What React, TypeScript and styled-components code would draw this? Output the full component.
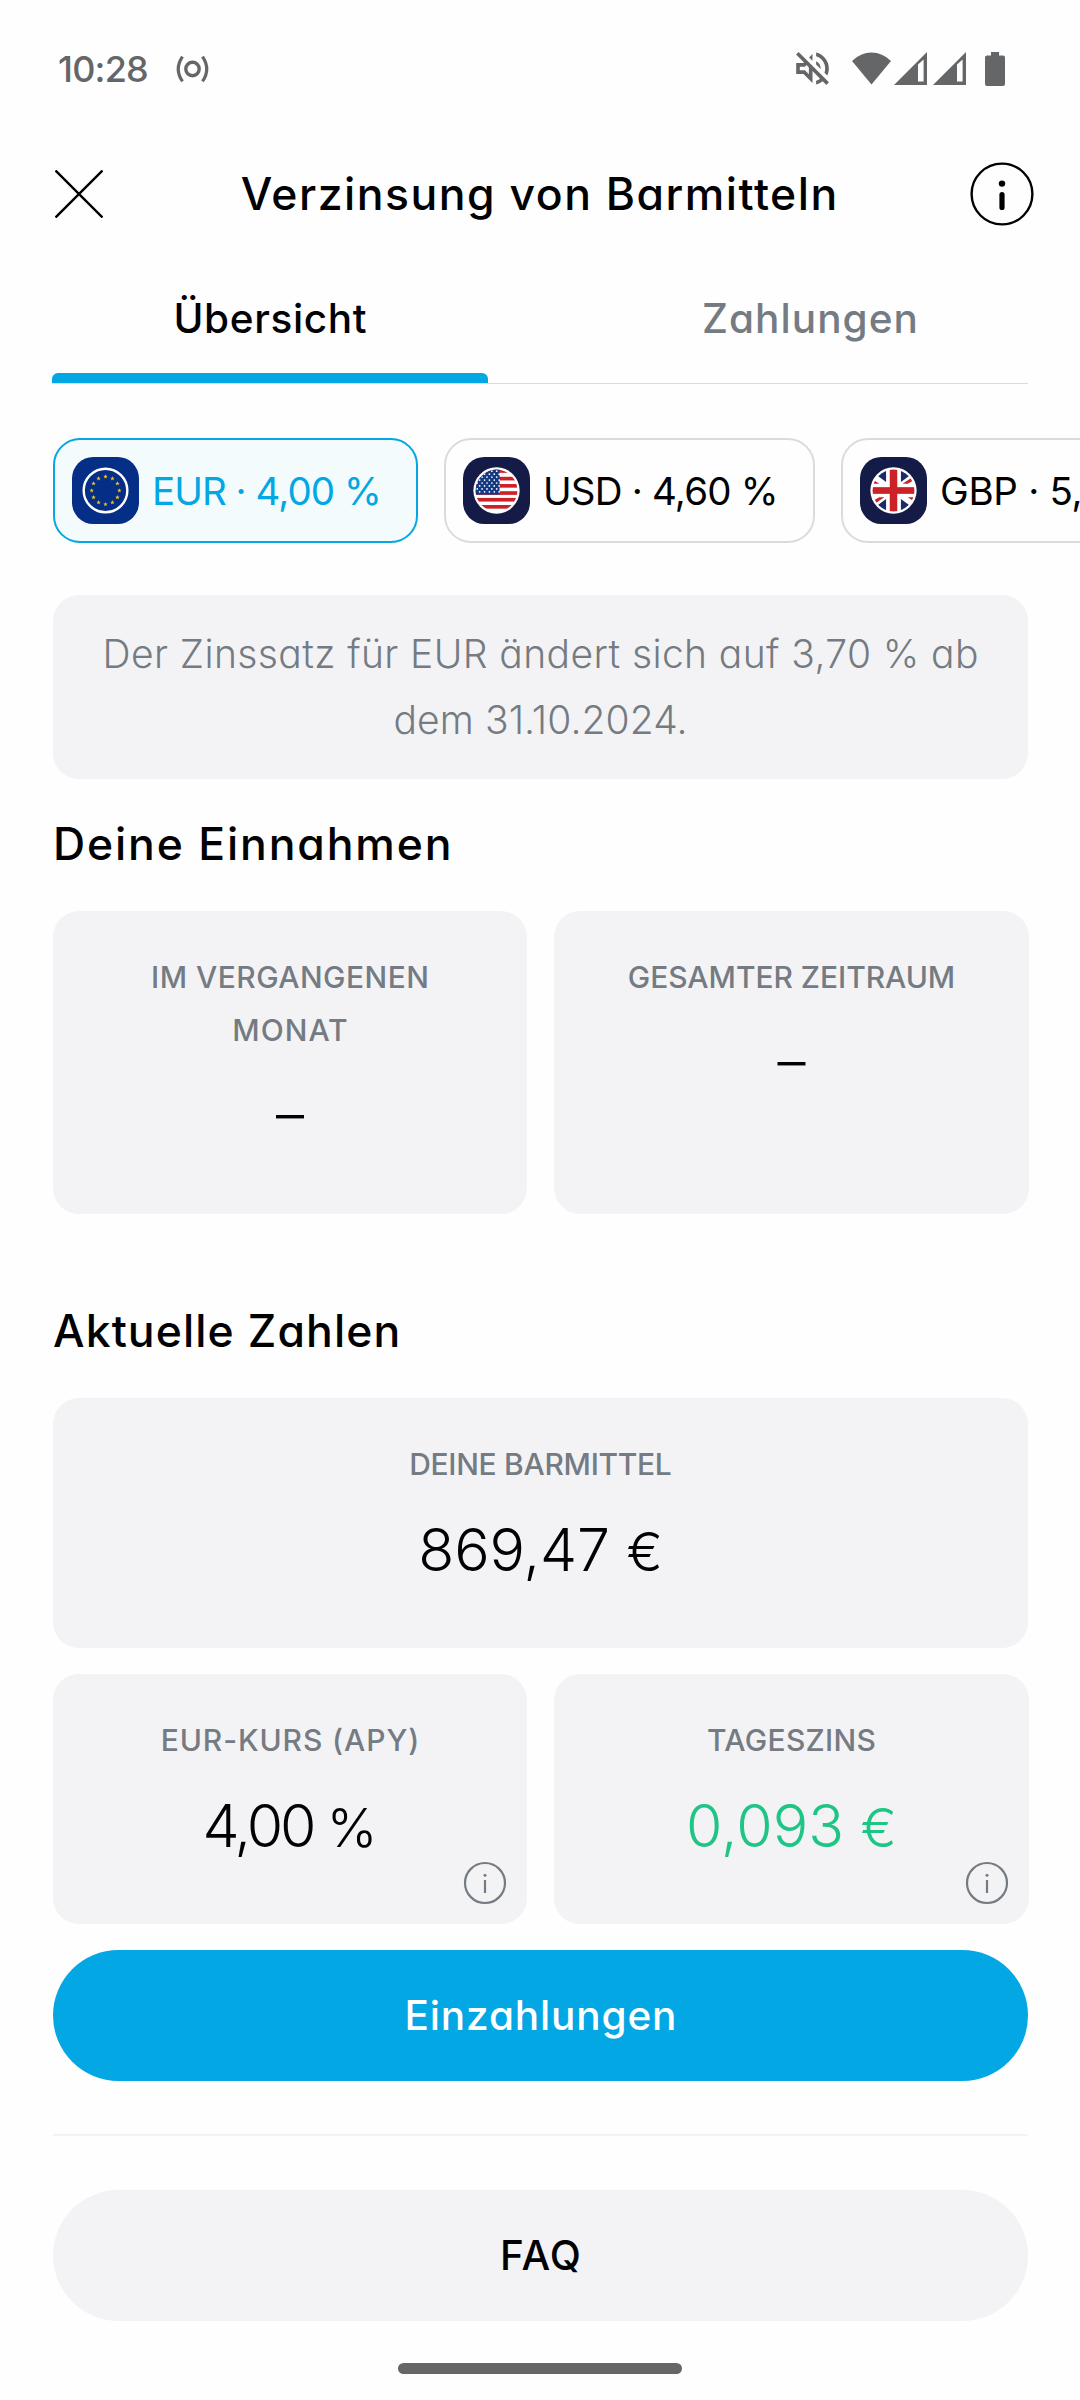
import React from "react";
import styled, { createGlobalStyle } from "styled-components";

const color = {
  ink: "#010103",
  muted: "#757b82",
  surface: "#f3f3f6",
  line: "#d8dce0",
  blue: "#02a7e3",
  green: "#1fc585",
  system: "#656668",
};

const GlobalStyle = createGlobalStyle`
  * { box-sizing: border-box; }
  html, body { margin: 0; padding: 0; background: #fefefe; }
  body {
    font-family: Inter, "Liberation Sans", sans-serif;
    font-feature-settings: "cv11";
    color: ${color.ink};
    overflow: hidden;
  }
  button { font: inherit; font-feature-settings: inherit; color: inherit; border: 0; background: none; padding: 0; }
  svg { display: block; flex: none; }
`;

const Screen = styled.main`
  width: 1080px;
  height: 2400px;
  display: flex;
  flex-direction: column;
  overflow: hidden;
  background: #fefefe;
`;

/* Text with tracking; the trailing gap is dropped so centring stays exact */
const Tracked = styled.span<{ $track?: number }>`
  letter-spacing: ${(p) => p.$track ?? 0}px;
  margin-right: ${(p) => -(p.$track ?? 0)}px;
  white-space: pre;
`;

const StatusBar = styled.header`
  height: 137px;
  padding: 0 75px 0 58px;
  display: flex;
  align-items: center;
  justify-content: space-between;
  color: ${color.system};
`;

const StatusGroup = styled.div<{ $gap?: number }>`
  display: flex;
  align-items: center;
  gap: ${(p) => p.$gap ?? 0}px;
`;

const Clock = styled.span`
  font-size: 36px;
  font-weight: 450;
`;

const TopBar = styled.div`
  height: 114px;
  padding: 0 46px 0 47px;
  display: grid;
  grid-template-columns: 64px 1fr 64px;
  align-items: center;
`;

const IconButton = styled.button`
  height: 64px;
  display: flex;
  align-items: center;
  justify-content: center;
`;

const Title = styled.h1`
  margin: 0;
  padding-right: 3px;
  text-align: center;
  font-size: 44.5px;
  line-height: 54px;
  font-weight: 500;
`;

const Tabs = styled.nav`
  height: 133px;
  margin: 0 52px;
  display: flex;
  justify-content: space-between;
  border-bottom: 1px solid ${color.line};
`;

const Tab = styled.button<{ $active?: boolean }>`
  width: 436px;
  display: flex;
  flex-direction: column;
  font-size: 40.5px;
  font-weight: 500;
  color: ${(p) => (p.$active ? color.ink : color.muted)};
`;

const TabLabel = styled.span`
  flex: 1;
  width: 100%;
  padding-top: 13px;
  display: flex;
  align-items: center;
  justify-content: center;
`;

const TabMarker = styled.span<{ $active?: boolean }>`
  width: 100%;
  height: 10px;
  border-radius: 6px 6px 0 0;
  background: ${(p) => (p.$active ? color.blue : "transparent")};
`;

const Chips = styled.div`
  margin: 54px 0 0 53px;
  display: flex;
  gap: 26px;
`;

const Chip = styled.button<{ $active?: boolean; $width: number }>`
  flex: none;
  width: ${(p) => p.$width}px;
  height: 105px;
  padding-left: 17px;
  display: flex;
  align-items: center;
  gap: 13px;
  font-size: 38.5px;
  font-weight: 400;
  border: 2.5px solid ${(p) => (p.$active ? color.blue : color.line)};
  border-radius: 27px;
  color: ${(p) => (p.$active ? color.blue : color.ink)};
  background: ${(p) => (p.$active ? "#f4fbfd" : "#fefefe")};
`;

const Body = styled.div`
  padding: 0 52px 0 53px;
  display: flex;
  flex-direction: column;
`;

const Notice = styled.p`
  margin: 52px 0 0;
  height: 184px;
  padding-top: 26px;
  display: flex;
  flex-direction: column;
  align-items: center;
  font-size: 39px;
  font-weight: 300;
  line-height: 66px;
  color: ${color.muted};
  background: ${color.surface};
  border-radius: 26px;
`;

const Heading = styled.h2<{ $spaced?: boolean }>`
  margin: ${(p) => (p.$spaced ? "52px" : "0")} 0 0;
  height: ${(p) => (p.$spaced ? 132 : 132)}px;
  padding-bottom: 2px;
  display: flex;
  align-items: center;
  font-size: 44.5px;
  line-height: 54px;
  font-weight: 500;
`;

const Pair = styled.div`
  display: grid;
  grid-template-columns: 474px 475px;
  gap: 27px;
`;

const Card = styled.section<{ $height: number }>`
  position: relative;
  height: ${(p) => p.$height}px;
  padding-top: 40px;
  display: flex;
  flex-direction: column;
  align-items: center;
  background: ${color.surface};
  border-radius: 26px;
`;

const CardLabel = styled.div`
  display: flex;
  flex-direction: column;
  align-items: center;
  font-size: 30px;
  font-weight: 450;
  line-height: 53px;
  color: ${color.muted};
`;

const CardValue = styled.div<{ $positive?: boolean }>`
  margin-top: 19px;
  font-size: 59px;
  font-weight: 300;
  line-height: 80px;
  color: ${(p) => (p.$positive ? color.green : color.ink)};
`;

const Unit = styled.span`
  font-size: 54px;
`;

const CardDash = styled.div`
  margin-top: 17px;
  font-size: 56px;
  font-weight: 300;
  line-height: 80px;
`;

const CardInfo = styled.button`
  position: absolute;
  right: 20px;
  bottom: 19px;
  color: ${color.muted};
`;

const Stack = styled.div`
  display: flex;
  flex-direction: column;
  gap: 26px;
`;

const PillButton = styled.button<{ $primary?: boolean }>`
  margin-top: ${(p) => (p.$primary ? 26 : 54)}px;
  height: 131px;
  border-radius: 66px;
  font-size: 40.5px;
  font-weight: 500;
  color: ${(p) => (p.$primary ? "#fff" : color.ink)};
  background: ${(p) => (p.$primary ? color.blue : color.surface)};
`;

const Divider = styled.hr`
  width: 100%;
  height: 2px;
  margin: 53px 0 0;
  border: 0;
  background: ${color.surface};
`;

const HomeBar = styled.div`
  width: 284px;
  height: 11px;
  margin: 42px auto 0;
  border-radius: 6px;
  background: ${color.system};
`;

const HotspotIcon = () => (
  <svg width="36" height="28" viewBox="0 0 36 28" fill="none" stroke="currentColor" strokeWidth="3.4">
    <circle cx="17.500" cy="14" r="6.700" />
    <path d="M7.500 1.600Q-1 14 7.500 26.400M27.500 1.600Q36 14 27.500 26.400" strokeWidth="3.200" />
  </svg>
);

const MutedIcon = () => (
  <svg width="33" height="33" viewBox="2.9 2.9 18.2 18.2" fill="currentColor">
    <path d="M4.34 2.93 2.93 4.34 7.29 8.7 7 9H3v6h4l5 5v-6.59l4.18 4.18c-.65.49-1.38.88-2.18 1.11v2.06a8.94 8.94 0 0 0 3.61-1.75l2.05 2.05 1.41-1.41L4.34 2.93zM10 15.17 7.83 13H5v-2h2.83l.88-.88L10 11.41v3.76zM19 12c0 .82-.15 1.61-.41 2.34l1.53 1.53c.56-1.17.88-2.48.88-3.87 0-4.28-2.99-7.86-7-8.77v2.06c2.89.86 5 3.54 5 6.71zm-7-8-1.88 1.88L12 7.76zm4.5 8A4.5 4.5 0 0 0 14 7.97v1.79l2.48 2.48c.01-.08.02-.16.02-.24z" />
  </svg>
);

const WifiIcon = () => (
  <svg width="39" height="33" viewBox="0 0 39 33" fill="currentColor">
    <path d="M19.5 32.5 0 9Q8.5 .5 19.5 .5T39 9Z" />
  </svg>
);

const SignalIcon = () => (
  <svg width="33" height="33" viewBox="0 0 33 33" fill="currentColor" fillRule="evenodd">
    <path d="M0 33 33 0V33ZM24 12.600V29.600H29.600V7.500Z" />
  </svg>
);

const BatteryIcon = () => (
  <svg width="20" height="34" viewBox="0 0 20 34" fill="currentColor">
    <path d="M6 0h8v3.4h4a2 2 0 0 1 2 2V32a2 2 0 0 1-2 2H2a2 2 0 0 1-2-2V5.400a2 2 0 0 1 2-2h4Z" />
  </svg>
);

const CloseIcon = () => (
  <svg width="48" height="48" viewBox="0 0 48 48" fill="none" stroke="currentColor" strokeWidth="2.4">
    <path d="M.5 .5 47.500 47.500M47.500 .5 .5 47.500" />
  </svg>
);

const InfoIcon = () => (
  <svg width="64" height="64" viewBox="0 0 64 64" fill="none" stroke="currentColor">
    <circle cx="32" cy="32" r="30.400" strokeWidth="2.400" />
    <circle cx="32" cy="21.600" r="3.200" fill="currentColor" stroke="none" />
    <path d="M32 32.500V45.500" strokeWidth="5.200" strokeLinecap="round" />
  </svg>
);

const SmallInfoIcon = () => (
  <svg width="44" height="44" viewBox="0 0 44 44" fill="none" stroke="currentColor">
    <circle cx="22" cy="22" r="20" strokeWidth="2.200" />
    <circle cx="22" cy="14.200" r="1.500" fill="currentColor" stroke="none" />
    <path d="M22 19V32" strokeWidth="2.200" />
  </svg>
);

const starPath = Array.from({ length: 10 }, (_, i) => {
  const r = i % 2 ? 1 : 2.3;
  const a = (i * Math.PI) / 5 - Math.PI / 2;
  return `${(r * Math.cos(a)).toFixed(2)},${(r * Math.sin(a)).toFixed(2)}`;
}).join(" ");

const EuFlag = () => (
  <svg width="67" height="67" viewBox="0 0 66 66">
    <rect width="66" height="66" rx="21" fill="#052e86" />
    <circle cx="33" cy="33" r="21.500" fill="none" stroke="#fff" strokeWidth="2.400" />
    {Array.from({ length: 12 }, (_, i) => {
      const a = (i * Math.PI) / 6;
      return (
        <polygon
          key={i}
          points={starPath}
          fill="#eec218"
          transform={`translate(${33 + 13.6 * Math.sin(a)} ${33 - 13.6 * Math.cos(a)})`}
        />
      );
    })}
  </svg>
);

const UsFlag = () => (
  <svg width="67" height="67" viewBox="0 0 66 66">
    <clipPath id="us-disc">
      <circle cx="33" cy="33" r="20.600" />
    </clipPath>
    <rect width="66" height="66" rx="21" fill="#151b47" />
    <circle cx="33" cy="33" r="22.800" fill="#fff" />
    <g clipPath="url(#us-disc)">
      {[12, 19.5, 26.6, 33.7, 40.3, 47.3].map((y) => (
        <rect key={y} x="10" y={y} width="46" height="3.600" fill="#cc2127" />
      ))}
      <rect x="10" y="10" width="26" height="27" fill="#133a80" />
      {[0, 1, 2, 3, 4, 5, 6, 7].map((row) =>
        [0, 1, 2, 3, 4].map((col) => (
          <circle
            key={`${row}-${col}`}
            cx={14 + col * 4.8 + (row % 2) * 2.4}
            cy={14 + row * 2.9}
            r=".85"
            fill="#fff"
          />
        ))
      )}
    </g>
  </svg>
);

const GbFlag = () => (
  <svg width="67" height="67" viewBox="0 0 66 66">
    <clipPath id="gb-disc">
      <circle cx="33" cy="33" r="20.600" />
    </clipPath>
    <rect width="66" height="66" rx="21" fill="#151b47" />
    <circle cx="33" cy="33" r="22.800" fill="#fff" />
    <g clipPath="url(#gb-disc)">
      <g fill="#1b2a6b">
        <path d="M25.700 24.700 16 17.600 19 10H25.700Z" />
        <path d="M40.300 24.700 50 17.600 47 10H40.300Z" />
        <path d="M25.700 41.300 16 48.400 19 56H25.700Z" />
        <path d="M40.300 41.300 50 48.400 47 56H40.300Z" />
      </g>
      <g fill="#cc2127">
        <path d="M12 23.500H14.500L19 26.300H12Z" />
        <path d="M54 42.500H51.500L47 39.700H54Z" />
        <path d="M42 26.300 50 21 54 22.500 47 26.300Z" />
        <path d="M24 39.700 16 45 12 43.500 19 39.700Z" />
        <rect x="29.300" y="10" width="7.400" height="46" />
        <rect x="10" y="29.700" width="46" height="6.600" />
      </g>
    </g>
  </svg>
);

export default function App() {
  return (
    <Screen>
      <GlobalStyle />
      <StatusBar>
        <StatusGroup $gap={26}>
          <Clock>
            <Tracked $track={-0.8}>10:28</Tracked>
          </Clock>
          <HotspotIcon />
        </StatusGroup>
        <StatusGroup $gap={19}>
          <StatusGroup $gap={23}>
            <MutedIcon />
            <StatusGroup $gap={3}>
              <WifiIcon />
              <StatusGroup $gap={6}>
                <SignalIcon />
                <SignalIcon />
              </StatusGroup>
            </StatusGroup>
          </StatusGroup>
          <BatteryIcon />
        </StatusGroup>
      </StatusBar>

      <TopBar>
        <IconButton aria-label="Schließen">
          <CloseIcon />
        </IconButton>
        <Title>
          <Tracked $track={1.5}>Verzinsung von Barmitteln</Tracked>
        </Title>
        <IconButton aria-label="Info">
          <InfoIcon />
        </IconButton>
      </TopBar>

      <Tabs>
        <Tab $active>
          <TabLabel>
            <Tracked $track={0.65}>Übersicht</Tracked>
          </TabLabel>
          <TabMarker $active />
        </Tab>
        <Tab>
          <TabLabel>
            <Tracked $track={1.05}>Zahlungen</Tracked>
          </TabLabel>
          <TabMarker />
        </Tab>
      </Tabs>

      <Chips>
        <Chip $active $width={365}>
          <EuFlag />
          <Tracked $track={-0.95}>EUR · 4,00 %</Tracked>
        </Chip>
        <Chip $width={371}>
          <UsFlag />
          <Tracked $track={-0.8}>USD · 4,60 %</Tracked>
        </Chip>
        <Chip $width={371}>
          <GbFlag />
          <Tracked $track={-0.3}>GBP · 5,</Tracked>
        </Chip>
      </Chips>

      <Body>
        <Notice>
          <Tracked $track={0.4}>Der Zinssatz für EUR ändert sich auf 3,70 % ab</Tracked>
          <Tracked $track={0.1}>dem 31.10.2024.</Tracked>
        </Notice>

        <Heading>
          <Tracked $track={1.85}>Deine Einnahmen</Tracked>
        </Heading>
        <Pair>
          <Card $height={303}>
            <CardLabel>
              <Tracked $track={0.45}>IM VERGANGENEN</Tracked>
              <Tracked $track={1}>MONAT</Tracked>
            </CardLabel>
            <CardDash>–</CardDash>
          </Card>
          <Card $height={303}>
            <CardLabel>
              <Tracked $track={-0.05}>GESAMTER ZEITRAUM</Tracked>
            </CardLabel>
            <CardDash>–</CardDash>
          </Card>
        </Pair>

        <Heading $spaced>
          <Tracked $track={1.1}>Aktuelle Zahlen</Tracked>
        </Heading>
        <Stack>
          <Card $height={250}>
            <CardLabel>
              <Tracked $track={-0.3}>DEINE BARMITTEL</Tracked>
            </CardLabel>
            <CardValue>
              <Tracked $track={-0.1}>
                869,47 <Unit>€</Unit>
              </Tracked>
            </CardValue>
          </Card>
          <Pair>
            <Card $height={250}>
              <CardLabel>
                <Tracked $track={0.9}>EUR-KURS (APY)</Tracked>
              </CardLabel>
              <CardValue>
                <Tracked $track={-3.1}>
                  4,00 <Unit>%</Unit>
                </Tracked>
              </CardValue>
              <CardInfo aria-label="Info zum EUR-Kurs">
                <SmallInfoIcon />
              </CardInfo>
            </Card>
            <Card $height={250}>
              <CardLabel>
                <Tracked $track={0.3}>TAGESZINS</Tracked>
              </CardLabel>
              <CardValue $positive>
                <Tracked>
                  0,093 <Unit>€</Unit>
                </Tracked>
              </CardValue>
              <CardInfo aria-label="Info zum Tageszins">
                <SmallInfoIcon />
              </CardInfo>
            </Card>
          </Pair>
        </Stack>

        <PillButton $primary>
          <Tracked $track={0.85}>Einzahlungen</Tracked>
        </PillButton>
        <Divider />
        <PillButton>
          <Tracked $track={1.2}>FAQ</Tracked>
        </PillButton>
      </Body>
      <HomeBar />
    </Screen>
  );
}
